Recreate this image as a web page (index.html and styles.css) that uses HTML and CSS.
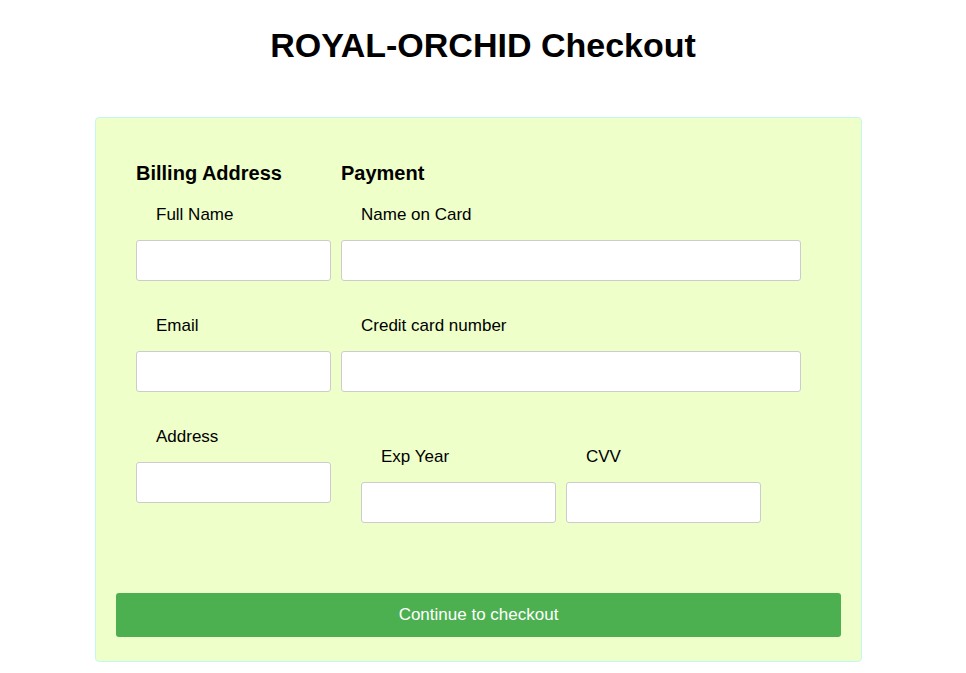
FILE: index.html
```html
<!DOCTYPE html>
<html lang="en">
<head>
<meta charset="utf-8">
<title>ROYAL-ORCHID Checkout</title>
<link rel="stylesheet" href="styles.css">
</head>
<body>
<h1 class="title">ROYAL-ORCHID Checkout</h1>
<form class="container">
  <div class="row">
    <div class="col col-billing">
      <h3 class="heading">Billing Address</h3>
      <label class="label" for="fname">Full Name</label>
      <input class="field" type="text" id="fname">
      <label class="label" for="email">Email</label>
      <input class="field" type="text" id="email">
      <label class="label" for="adr">Address</label>
      <input class="field" type="text" id="adr">
    </div>
    <div class="col col-payment">
      <h3 class="heading">Payment</h3>
      <label class="label" for="cname">Name on Card</label>
      <input class="field" type="text" id="cname">
      <label class="label" for="ccnum">Credit card number</label>
      <input class="field" type="text" id="ccnum">
      <div class="subrow">
        <div class="subcol">
          <label class="label" for="expyear">Exp Year</label>
          <input class="field" type="text" id="expyear">
        </div>
        <div class="subcol">
          <label class="label" for="cvv">CVV</label>
          <input class="field" type="text" id="cvv">
        </div>
      </div>
    </div>
  </div>
  <button class="btn" type="button">Continue to checkout</button>
</form>
</body>
</html>
```

FILE: styles.css
```css
* {
  box-sizing: border-box;
}

body {
  margin: 0;
  padding: 0 8px;
  background: #ffffff;
  color: #000000;
  font-family: "Liberation Sans", Arial, sans-serif;
}

.title {
  margin: 26px 0 0;
  font-size: 34px;
  line-height: 38px;
  font-weight: bold;
  text-align: center;
}

.container {
  display: block;
  width: 767px;
  margin: 53px 0 0 87px;
  padding: 43px 20px 24px;
  background: #eeffca;
  border: 1px solid #c4f7f0;
  border-radius: 4px;
}

.row {
  display: flex;
  gap: 10px;
  padding-left: 20px;
}

.col {
  display: flex;
  flex-direction: column;
}

.col-billing {
  width: 195px;
}

.col-payment {
  width: 460px;
}

.heading {
  margin: 0 0 20px;
  font-size: 20px;
  line-height: 24px;
  font-weight: bold;
  white-space: nowrap;
}

.label {
  display: block;
  margin: 0 0 15px;
  padding-left: 20px;
  font-size: 17px;
  line-height: 20px;
  white-space: nowrap;
}

.field {
  display: block;
  width: 100%;
  height: 41px;
  margin: 0 0 35px;
  padding: 0 12px;
  background: #ffffff;
  border: 1px solid #cccccc;
  border-radius: 3px;
  font-family: inherit;
  font-size: 17px;
}

.subrow {
  display: flex;
  gap: 10px;
  margin-top: 20px;
  padding-left: 20px;
}

.subcol {
  width: 195px;
}

.btn {
  display: block;
  width: 100%;
  height: 44px;
  margin-top: 35px;
  padding: 0;
  background: #4caf50;
  color: #ffffff;
  border: none;
  border-radius: 3px;
  font-family: inherit;
  font-size: 17px;
  cursor: pointer;
}
```
